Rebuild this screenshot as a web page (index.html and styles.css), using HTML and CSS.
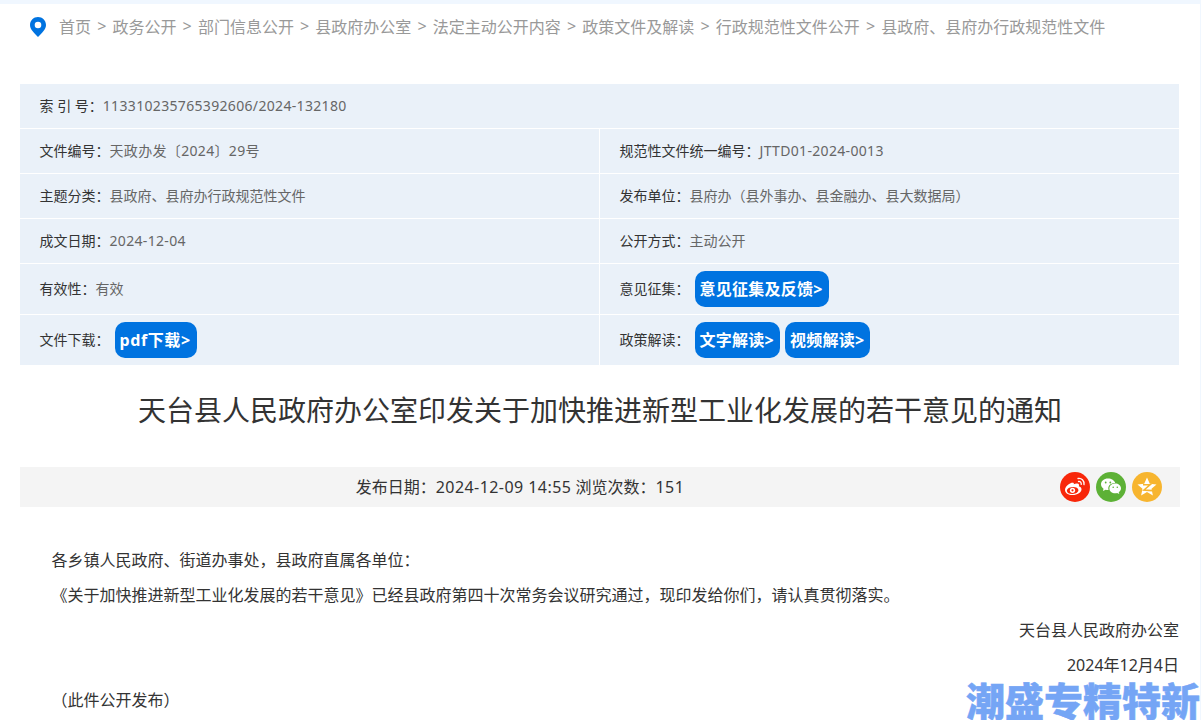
FILE: index.html
```html
<!DOCTYPE html>
<html lang="zh-CN">
<head>
<meta charset="utf-8">
<title>天台县人民政府办公室印发关于加快推进新型工业化发展的若干意见的通知</title>
<link rel="stylesheet" href="styles.css">
</head>
<body>
<main class="panel">
  <nav class="crumbs">
    <svg class="pin" viewBox="0 0 16 20" width="16" height="20"><path fill="#0073e0" fill-rule="evenodd" d="M8 0C3.600 0 0 3.500 0 7.900c0 2.400 1.100 4.400 2.500 6.200C4 16.100 6 18.200 8 20c2-1.800 4-3.900 5.500-5.900C14.900 12.300 16 10.300 16 7.900 16 3.500 12.400 0 8 0Zm0 4.700a3.300 3.300 0 1 1 0 6.600 3.300 3.300 0 0 1 0-6.600Z"/></svg>
    <a class="crumb">首页</a><span class="sep">&gt;</span>
    <a class="crumb">政务公开</a><span class="sep">&gt;</span>
    <a class="crumb">部门信息公开</a><span class="sep">&gt;</span>
    <a class="crumb">县政府办公室</a><span class="sep">&gt;</span>
    <a class="crumb">法定主动公开内容</a><span class="sep">&gt;</span>
    <a class="crumb">政策文件及解读</a><span class="sep">&gt;</span>
    <a class="crumb">行政规范性文件公开</a><span class="sep">&gt;</span>
    <a class="crumb">县政府、县府办行政规范性文件</a>
  </nav>

  <section class="info">
    <div class="cell wide h44"><span class="label">索 引 号：</span><span class="value num">113310235765392606/2024-132180</span></div>
    <div class="cell h44"><span class="label">文件编号：</span><span class="value num">天政办发〔2024〕29号</span></div>
    <div class="cell h44"><span class="label">规范性文件统一编号：</span><span class="value num">JTTD01-2024-0013</span></div>
    <div class="cell h44"><span class="label">主题分类：</span><span class="value">县政府、县府办行政规范性文件</span></div>
    <div class="cell h44"><span class="label">发布单位：</span><span class="value">县府办（县外事办、县金融办、县大数据局）</span></div>
    <div class="cell h44"><span class="label">成文日期：</span><span class="value num">2024-12-04</span></div>
    <div class="cell h44"><span class="label">公开方式：</span><span class="value">主动公开</span></div>
    <div class="cell h50"><span class="label">有效性：</span><span class="value">有效</span></div>
    <div class="cell h50"><span class="label label-btn">意见征集：</span><a class="btn">意见征集及反馈&gt;</a></div>
    <div class="cell h50"><span class="label label-btn">文件下载：</span><a class="btn btn-pdf">pdf下载&gt;</a></div>
    <div class="cell h50"><span class="label label-btn">政策解读：</span><a class="btn">文字解读&gt;</a><a class="btn">视频解读&gt;</a></div>
  </section>

  <h1 class="title">天台县人民政府办公室印发关于加快推进新型工业化发展的若干意见的通知</h1>

  <div class="meta">
    <p class="meta-text">发布日期：<span class="num-lg">2024-12-09 14:55</span> 浏览次数：<span class="num-lg">151</span></p>
    <div class="share">
      <svg class="share-icon" viewBox="0 0 30 30" width="30" height="30"><circle cx="15" cy="15" r="15" fill="#f8270a"/><path fill="#fff" fill-rule="evenodd" d="M13 10.500c-4 .6-8 4-8 7.500 0 3 3.400 5 7.500 5 5 0 9-2.700 9-5.800 0-1.700-1.400-2.500-2.700-2.900.6-1.500.3-2.700-1.700-2.900-1.200-.1-2.400.4-3.300.8.300-1.200-.2-2-1.800-1.700Zm-.6 4.500c3.200-.3 5.800 1 6 3 .1 2-2.300 3.700-5.500 4-3.200.3-5.800-1-6-3-.1-2 2.300-3.700 5.500-4Z"/><circle cx="12.500" cy="18.300" r="2.600" fill="#fff"/><circle cx="12.500" cy="18.300" r="1.100" fill="#f8270a"/><path fill="none" stroke="#fff" stroke-width="1.300" stroke-linecap="round" d="M18 6.500c3.500-.6 6.500 2 6 6.200M18.500 9.500c1.800-.3 3 1 2.700 2.800"/></svg>
      <svg class="share-icon" viewBox="0 0 30 30" width="30" height="30"><circle cx="15" cy="15" r="15" fill="#5db136"/><path fill="#fff" d="M12 6.500c-4 0-7 2.600-7 5.800 0 1.800 1 3.400 2.500 4.400L7 19l2.600-1.300c.8.200 1.600.4 2.400.4h.6c-.2-.5-.3-1-.3-1.600 0-3 2.800-5.400 6.400-5.400h.5C18.500 8.300 15.500 6.500 12 6.500Z"/><path fill="#fff" d="M25 16.400c0-2.700-2.600-4.800-5.800-4.800s-5.800 2.100-5.800 4.800 2.600 4.800 5.800 4.800c.7 0 1.300-.1 1.900-.3l2.200 1.200-.6-2c1.400-.9 2.300-2.200 2.300-3.700Z"/><circle cx="9.700" cy="10.500" r=".9" fill="#5db136"/><circle cx="14.300" cy="10.500" r=".9" fill="#5db136"/><circle cx="17.200" cy="15.300" r=".8" fill="#5db136"/><circle cx="21.300" cy="15.300" r=".8" fill="#5db136"/></svg>
      <svg class="share-icon" viewBox="0 0 30 30" width="30" height="30"><circle cx="15" cy="15" r="15" fill="#f7b52f"/><path fill="#fff" d="M15 5.500l2.800 6.200 6.700.7-5 4.400 1.400 6.600-5.900-3.400-5.900 3.400 1.400-6.600-5-4.400 6.700-.7Z"/><path fill="none" stroke="#f7b52f" stroke-width="1.600" d="M11 12.800h7l-6 5.200 8 .6"/></svg>
    </div>
  </div>

  <article class="body">
    <p class="para">各乡镇人民政府、街道办事处，县政府直属各单位：</p>
    <p class="para">《关于加快推进新型工业化发展的若干意见》已经县政府第四十次常务会议研究通过，现印发给你们，请认真贯彻落实。</p>
    <p class="sign">天台县人民政府办公室</p>
    <p class="sign">2024年12月4日</p>
    <p class="para">（此件公开发布）</p>
  </article>
</main>
<div class="watermark">潮盛专精特新</div>
</body>
</html>
```
FILE: styles.css
```css
* { box-sizing: border-box; }
html, body { height: 100%; }
body {
  margin: 0;
  padding: 4px 1px 0 0;
  background: #f0f7ff;
  overflow: hidden;
  position: relative;
  font-family: "Noto Sans", "Noto Sans CJK SC", sans-serif;
  color: #333;
}
.panel {
  background: #fff;
  height: 100%;
  padding: 0 20px;
}
.crumbs {
  display: flex;
  align-items: center;
  height: 44px;
  padding-left: 10px;
  margin-bottom: 36px;
  font-size: 16px;
  color: #999;
}
.pin { margin-right: 13px; flex: none; margin-top: 2px; }
.sep { margin: 0 6.150px; }
.info {
  display: grid;
  grid-template-columns: 579px 579px;
  gap: 1px;
  width: 1159px;
  font-size: 14px;
  line-height: 20px;
}
.cell {
  display: flex;
  align-items: center;
  padding-left: 19.500px;
  background: #eaf1f9;
}
.wide { grid-column: 1 / -1; }
.h44 { height: 44px; }
.h50 { height: 50px; }
.label { color: #333; }
.label-btn { margin-right: 5px; }
.value { color: #666; }
.num { letter-spacing: .33px; }
.num-lg { letter-spacing: .44px; }
.btn {
  display: inline-flex;
  align-items: center;
  height: 36px;
  margin-right: 5px;
  padding: 0 6px 0 5px;
  border-radius: 10px;
  background: #0073e0;
  color: #fff;
  font-size: 16px;
  font-weight: 700;
  letter-spacing: .25px;
}
.btn-pdf { letter-spacing: .6px; }
.title {
  margin: 0;
  height: 102px;
  line-height: 90px;
  text-align: center;
  font-size: 28px;
  font-weight: 400;
  color: #333;
}
.meta {
  display: flex;
  align-items: center;
  height: 40px;
  width: 1160px;
  background: #f4f4f4;
}
.meta-text {
  flex: 0 0 1000px;
  margin: 0;
  padding-bottom: 2px;
  text-align: center;
  font-size: 16px;
}
.share {
  flex: 1;
  display: flex;
  justify-content: flex-end;
  gap: 6px;
  padding-right: 18px;
}
.share-icon { display: block; }
.body {
  width: 1159px;
  padding-top: 36px;
  font-size: 16px;
  line-height: 35px;
}
.para { margin: 0; text-indent: 31.500px; }
.sign { margin: 0; text-align: right; }
.watermark {
  position: absolute;
  left: 966px;
  top: 682px;
  white-space: nowrap;
  font-size: 39px;
  line-height: 38px;
  font-weight: 900;
  -webkit-text-stroke: .5px #75a5f5;
  color: #75a5f5;
}
```
